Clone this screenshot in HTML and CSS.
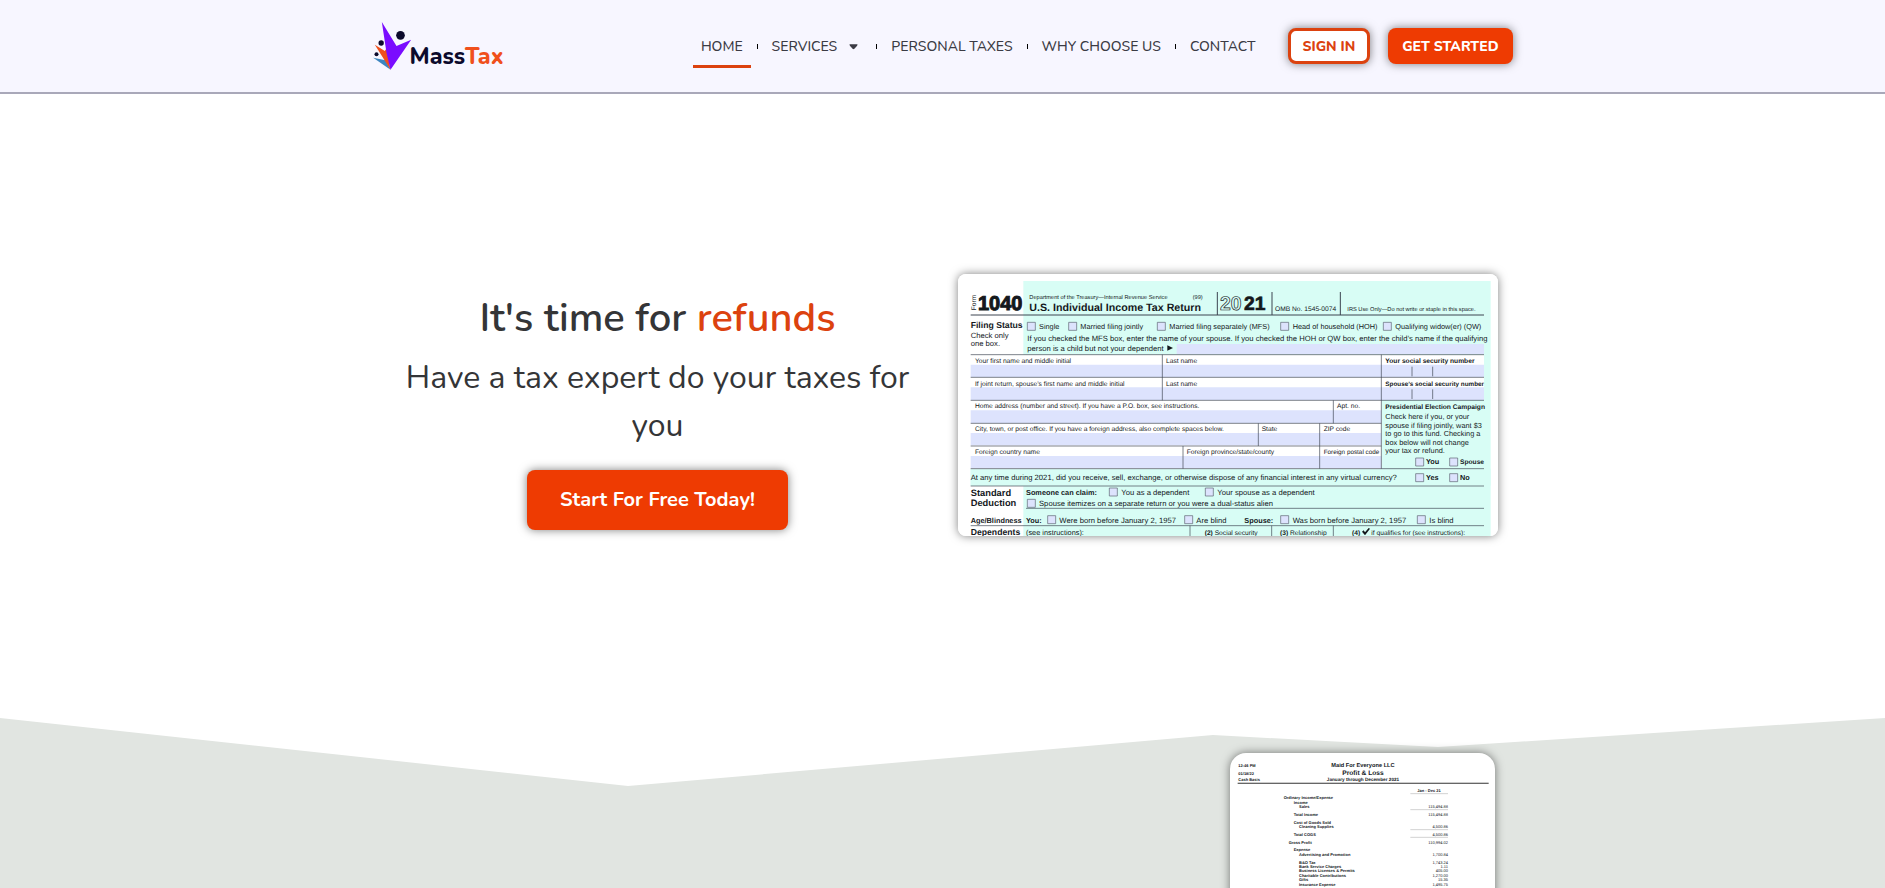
FILE: index.html
```html
<!DOCTYPE html>
<html lang="en">
<head>
<meta charset="utf-8">
<meta name="viewport" content="width=device-width, initial-scale=1">
<title>MassTax</title>
<link rel="stylesheet" href="styles.css">
</head>
<body>
<header class="site-header">
  <div class="container header-row">
    <a class="logo" href="#" aria-label="MassTax">
      <svg class="logo-mark" viewBox="0 0 116 144" aria-hidden="true">
        <path fill="#3d86c0" d="M0 107 L37 115 L52 143 Z"/>
        <path fill="#f0501c" d="M5 68 L35 87 L41 78 L52 143 Z"/>
        <path fill="#7a0cff" d="M26 0 L70 72 L114 53 L52 143 L40 92 Z"/>
        <circle cx="82" cy="40" r="13" fill="#0c0a2c"/>
        <circle cx="24" cy="63" r="8" fill="#0c0a2c"/>
        <circle cx="10" cy="97" r="6" fill="#0c0a2c"/>
      </svg>
      <span class="logo-text">Mass<span class="logo-accent">Tax</span></span>
    </a>
    <nav class="main-nav">
      <ul class="nav-list">
        <li><a class="nav-link is-active" href="#">HOME</a></li>
        <li><a class="nav-link" href="#">SERVICES<svg class="caret" viewBox="0 0 10 6" aria-hidden="true"><path d="M1 0H9Q10 0 9 1.500L6 5Q5 6 4 5L1 1.500Q0 0 1 0Z"/></svg></a></li>
        <li><a class="nav-link" href="#">PERSONAL TAXES</a></li>
        <li><a class="nav-link" href="#">WHY CHOOSE US</a></li>
        <li><a class="nav-link" href="#">CONTACT</a></li>
      </ul>
    </nav>
    <div class="header-actions">
      <a class="btn btn-outline" href="#">SIGN IN</a>
      <a class="btn btn-solid" href="#">GET STARTED</a>
    </div>
  </div>
</header>

<main class="page">
  <section class="hero">
    <div class="container hero-row">
      <div class="hero-copy">
        <h1 class="hero-title">It's time for <span class="accent">refunds</span></h1>
        <p class="hero-sub">Have a tax expert do your taxes for you</p>
        <a class="btn btn-large" href="#">Start For Free Today!</a>
      </div>
      <div class="hero-media">
        <svg class="form-picture" viewBox="24 27 1620 786" role="img" aria-label="Form 1040, U.S. Individual Income Tax Return">
          <rect x="24" y="27" width="1620" height="786" fill="#fff"/>
          <path class="mint" d="M220 48H1622V813H220V663H62V611H1295V269H220Z"/>
          <rect class="mint" x="62" y="611" width="1560" height="51"/>
          <path fill="#fff" d="M62 269H1294V611H62ZM1294 269H1602V405H1294Z"/>
          <g class="field">
            <path d="M680 237H1602V267H680Z"/>
            <path d="M62 299H1602V336H62ZM62 367H1602V405H62ZM62 436H1294V474H62ZM62 504H1294V541H62ZM62 573H1294V610H62Z"/>
          </g>
          <g class="rule">
            <path class="rule-heavy" d="M62 150H1602M802 81V150M966 81V150M1171 81V150"/>
            <path d="M62 269H1602M62 337H1602M62 406H1602M62 475H1294M62 543H1294M62 611H1602M62 663H1602M228 730H1602M62 782H1602"/>
            <path d="M637 269V406M1294 269V611M1150 406V475M925 475V543M1109 475V611M699 543V611M720 782V813M965 782V813M1150 782V813"/>
            <path d="M1386 305V334M1448 305V334M1386 373V402M1448 373V402"/>
          </g>
          <g class="box">
            <path d="M232 172h24v24h-24zM356 172h24v24h-24zM622 172h24v24h-24zM992 172h24v24h-24zM1300 172h24v24h-24z"/>
            <path d="M1397 579h24v24h-24zM1499 579h24v24h-24zM1397 626h24v24h-24zM1499 626h24v24h-24z"/>
            <path d="M478 669h24v24h-24zM766 669h24v24h-24zM232 703h24v24h-24zM293 752h24v24h-24zM704 752h24v24h-24zM992 752h24v24h-24zM1402 752h24v24h-24z"/>
          </g>
          <path d="M652 241V257L669 249Z"/>
          <text class="f20" transform="translate(77 136) rotate(-90)">Form</text>
          <text class="f-1040" x="84" y="134">1040</text>
          <text class="f17" x="238" y="103">Department of the Treasury—Internal Revenue Service</text>
          <text class="f17" x="728" y="103">(99)</text>
          <text class="f32 b" x="238" y="139">U.S. Individual Income Tax Return</text>
          <text class="f-year f-hollow" x="810" y="134">20</text>
          <text class="f-year" x="882" y="134">21</text>
          <text class="f20" x="975" y="139">OMB No. 1545-0074</text>
          <text class="f17" x="1192" y="139">IRS Use Only—Do not write or staple in this space.</text>

          <text class="f26 b" x="62" y="189">Filing Status</text>
          <text class="f23" x="62" y="220">Check only</text>
          <text class="f23" x="62" y="244">one box.</text>
          <g class="f22">
            <text x="267" y="192">Single</text>
            <text x="391" y="192">Married filing jointly</text>
            <text x="658" y="192">Married filing separately (MFS)</text>
            <text x="1028" y="192">Head of household (HOH)</text>
            <text x="1336" y="192">Qualifying widow(er) (QW)</text>
          </g>
          <g class="f23">
            <text x="232" y="227">If you checked the MFS box, enter the name of your spouse. If you checked the HOH or QW box, enter the child’s name if the qualifying</text>
            <text x="232" y="257">person is a child but not your dependent</text>
          </g>
          <g class="f20">
            <text x="75" y="293">Your first name and middle initial</text>
            <text x="648" y="293">Last name</text>
            <text x="75" y="362">If joint return, spouse’s first name and middle initial</text>
            <text x="648" y="362">Last name</text>
            <text x="75" y="430">Home address (number and street). If you have a P.O. box, see instructions.</text>
            <text x="1161" y="430">Apt. no.</text>
            <text x="75" y="498">City, town, or post office. If you have a foreign address, also complete spaces below.</text>
            <text x="935" y="498">State</text>
            <text x="1121" y="498">ZIP code</text>
            <text x="75" y="567">Foreign country name</text>
            <text x="710" y="567">Foreign province/state/county</text>
            <text class="f19" x="1121" y="567">Foreign postal code</text>
            <text class="b" x="1306" y="293">Your social security number</text>
            <text class="f19 b" x="1306" y="362">Spouse’s social security number</text>
            <text class="b" x="1306" y="432">Presidential Election Campaign</text>
          </g>
          <g class="f22">
            <text x="1306" y="462">Check here if you, or your</text>
            <text x="1306" y="488">spouse if filing jointly, want $3</text>
            <text x="1306" y="514">to go to this fund. Checking a</text>
            <text x="1306" y="540">box below will not change</text>
            <text x="1306" y="565">your tax or refund.</text>
            <text class="b" x="1428" y="598">You</text>
            <text class="f20 b" x="1530" y="598">Spouse</text>
            <text class="b" x="1428" y="645">Yes</text>
            <text class="b" x="1530" y="645">No</text>
          </g>
          <text class="f23" x="62" y="645">At any time during 2021, did you receive, sell, exchange, or otherwise dispose of any financial interest in any virtual currency?</text>
          <text class="f28 b" x="62" y="694">Standard</text>
          <text class="f28 b" x="62" y="723">Deduction</text>
          <text class="f22 b" x="228" y="689">Someone can claim:</text>
          <text class="f23" x="514" y="689">You as a dependent</text>
          <text class="f23" x="802" y="689">Your spouse as a dependent</text>
          <text class="f23" x="267" y="723">Spouse itemizes on a separate return or you were a dual-status alien</text>
          <text class="f22 b" x="62" y="773">Age/Blindness</text>
          <text class="f22 b" x="228" y="773">You:</text>
          <text class="f23" x="328" y="773">Were born before January 2, 1957</text>
          <text class="f23" x="739" y="773">Are blind</text>
          <text class="f22 b" x="883" y="773">Spouse:</text>
          <text class="f23" x="1028" y="773">Was born before January 2, 1957</text>
          <text class="f23" x="1438" y="773">Is blind</text>
          <text class="f26 b" x="62" y="811">Dependents</text>
          <text class="f22" x="228" y="811">(see instructions):</text>
          <text class="f20" x="764" y="811"><tspan class="b">(2)</tspan> Social security</text>
          <text class="f20" x="990" y="811"><tspan class="b">(3)</tspan> Relationship</text>
          <text class="f20 b" x="1206" y="811">(4)</text>
          <path d="M1236 800L1241 796L1245 802L1256 789L1260 791L1245 811Z"/>
          <text class="f20" x="1264" y="811">if qualifies for (see instructions):</text>
        </svg>
      </div>
    </div>
  </section>

  <section class="services">
    <svg class="divider" viewBox="0 0 1885 68" preserveAspectRatio="none" aria-hidden="true"><path fill="#fff" d="M0 0L628 68L1213 17L1438 29L1885 0Z"/></svg>
    <div class="container services-row">
      <div class="report-col">
        <svg class="report-picture" viewBox="60 38 795 600" role="img" aria-label="Maid For Everyone LLC Profit and Loss report">
          <g class="f12 b">
            <text x="85" y="81">12:46 PM</text>
            <text x="85" y="105">01/18/22</text>
            <text x="85" y="122">Cash Basis</text>
          </g>
          <g class="b mid">
            <text class="f17" x="459" y="81">Maid For Everyone LLC</text>
            <text class="f20" x="459" y="103">Profit &amp; Loss</text>
            <text class="f14" x="459" y="122">January through December 2021</text>
            <text class="f12" x="657" y="156">Jan - Dec 21</text>
          </g>
          <path d="M83 127H836V130H83Z" fill="#333"/>
          <path class="thin" d="M601 160H714M601 208H714M601 268H714M601 291H714"/>
          <g class="f12 b">
            <text x="221" y="177">Ordinary Income/Expense</text>
            <text x="251" y="191">Income</text>
            <text x="267" y="204">Sales</text>
            <text x="251" y="227">Total Income</text>
            <text x="251" y="250">Cost of Goods Sold</text>
            <text x="267" y="264">Cleaning Supplies</text>
            <text x="251" y="287">Total COGS</text>
            <text x="236" y="310">Gross Profit</text>
            <text x="251" y="333">Expense</text>
            <text x="267" y="347">Advertising and Promotion</text>
            <text x="267" y="370">B&amp;O Tax</text>
            <text x="267" y="383">Bank Service Charges</text>
            <text x="267" y="396">Business Licenses &amp; Permits</text>
            <text x="267" y="410">Charitable Contributions</text>
            <text x="267" y="423">Gifts</text>
            <text x="267" y="437">Insurance Expense</text>
          </g>
          <g class="f12 end">
            <text x="714" y="204">115,494.88</text>
            <text x="714" y="227">115,494.88</text>
            <text x="714" y="264">4,500.86</text>
            <text x="714" y="287">4,500.86</text>
            <text x="714" y="310">110,994.02</text>
            <text x="714" y="347">1,700.84</text>
            <text x="714" y="370">1,743.24</text>
            <text x="714" y="383">1.11</text>
            <text x="714" y="396">405.00</text>
            <text x="714" y="410">1,270.00</text>
            <text x="714" y="423">15.35</text>
            <text x="714" y="437">1,495.75</text>
          </g>
        </svg>
      </div>
    </div>
  </section>
</main>
</body>
</html>
```
FILE: styles.css
```css
* { box-sizing: border-box; }

body {
  margin: 0;
  height: 100vh;
  display: flex;
  flex-direction: column;
  background: #fff;
  color: #343537;
  font-family: "Nunito", "Open Sans", "Noto Sans", sans-serif;
}

a { color: inherit; text-decoration: none; }

.container {
  width: 100%;
  max-width: 1140px;
  margin: 0 auto;
}

/* Header */
.site-header {
  background: #f7f6ff;
  border-bottom: 2px solid #a9a8b9;
}

.header-row {
  display: flex;
  align-items: center;
  height: 92px;
}

.logo {
  display: flex;
  align-items: center;
  margin-right: auto;
}

.logo-mark {
  width: 39px;
  height: 48px;
  margin-right: -2px;
}

.logo-text {
  padding-top: 22px;
  font-weight: 800;
  font-size: 23px;
  line-height: 28px;
  color: #0c0a2c;
}

.logo-accent { color: #f0501c; }

.nav-list {
  display: flex;
  margin: 0;
  padding: 0;
  list-style: none;
}

.nav-list li {
  display: flex;
  align-items: center;
}

.nav-list li + li::before {
  content: "";
  width: 1px;
  height: 5px;
  margin: 0 6px;
  background: #000;
}

.nav-link {
  display: flex;
  align-items: center;
  padding: 12px 8px 7px;
  border-bottom: 3px solid transparent;
  font-weight: 500;
  font-size: 14px;
  line-height: 22px;
  color: #3b3b44;
}

.nav-link.is-active { border-bottom-color: #dc420f; }

.caret {
  width: 9px;
  height: 6px;
  margin: 0 4px 0 12px;
  fill: #3b3b44;
}

.header-actions {
  display: flex;
  gap: 18px;
  margin-left: 24px;
}

.btn {
  display: inline-flex;
  align-items: center;
  justify-content: center;
  height: 36px;
  padding: 2px 14px 0;
  border-radius: 8px;
  background: #ee3b02;
  box-shadow: 0 0 10px rgba(0, 0, 0, 0.5);
  color: #fff;
  font-weight: 800;
  font-size: 14px;
  line-height: 20px;
  white-space: nowrap;
}

.btn-outline {
  padding: 2px 12px 0;
  border: 3px solid #dc420f;
  background: #fff;
  color: #dc420f;
}

.btn-large {
  height: 60px;
  padding: 0 33px;
  font-weight: 700;
  font-size: 20px;
}

/* Hero */
.page {
  flex: 1;
  display: flex;
  flex-direction: column;
  min-height: 0;
}

.hero { padding: 180px 0 182px; }

.hero-row {
  display: grid;
  grid-template-columns: 1fr 1fr;
  align-items: center;
}

.hero-copy {
  padding: 10px 15px 0;
  text-align: center;
}

.hero-title {
  margin: 0 0 8px;
  font-weight: 600;
  font-size: 40px;
  line-height: 56px;
}

.accent { color: #dc420f; }

.hero-sub {
  margin: 0 0 20px;
  font-size: 32px;
  line-height: 48px;
}

.hero-media { padding: 0 15px; }

.form-picture {
  display: block;
  width: 100%;
  border-radius: 8px;
  box-shadow: 0 0 10px rgba(0, 0, 0, 0.5);
}

/* Text and line styles inside the two documents, in drawing units */
.form-picture,
.report-picture {
  font-family: "Liberation Sans", Arial, sans-serif;
  text-rendering: geometricPrecision;
  fill: #14181c;
}

.mint { fill: #d8fdf5; }
.field { fill: #dde3fd; }
.rule { fill: none; stroke: #3c4450; stroke-width: 2px; }
.rule-heavy { stroke-width: 3px; }
.box { fill: #dde3fd; stroke: #5a6070; stroke-width: 2px; }
.thin { fill: none; stroke: #777; stroke-width: 1px; }
.b { font-weight: 700; }
.mid { text-anchor: middle; }
.end { text-anchor: end; }
.f12 { font-size: 12px; }
.f14 { font-size: 14px; }
.f17 { font-size: 17px; }
.f19 { font-size: 19px; }
.f20 { font-size: 20px; }
.f22 { font-size: 22px; }
.f23 { font-size: 23px; }
.f26 { font-size: 26px; }
.f28 { font-size: 28px; }
.f32 { font-size: 32px; }
.f22 .f20 { font-size: 20px; }
.f-1040 { font-size: 60px; font-weight: 700; stroke: #14181c; stroke-width: 3px; }
.f-year { font-size: 58px; font-weight: 700; stroke: #14181c; stroke-width: 2px; }
.f-hollow { fill: none; }

/* Services */
.services {
  position: relative;
  flex: 1;
  min-height: 170px;
  overflow: hidden;
  background: #e1e5e1;
}

.divider {
  position: absolute;
  top: 0;
  left: 0;
  width: 100%;
  height: 68px;
}

.services-row {
  position: relative;
  display: flex;
  justify-content: flex-end;
  padding-top: 35px;
}

.report-col {
  display: flex;
  justify-content: center;
  width: 300px;
}

.report-picture {
  display: block;
  width: 265px;
  border-radius: 16px;
  background: #fff;
  box-shadow: 0 0 10px rgba(0, 0, 0, 0.5);
}
```
